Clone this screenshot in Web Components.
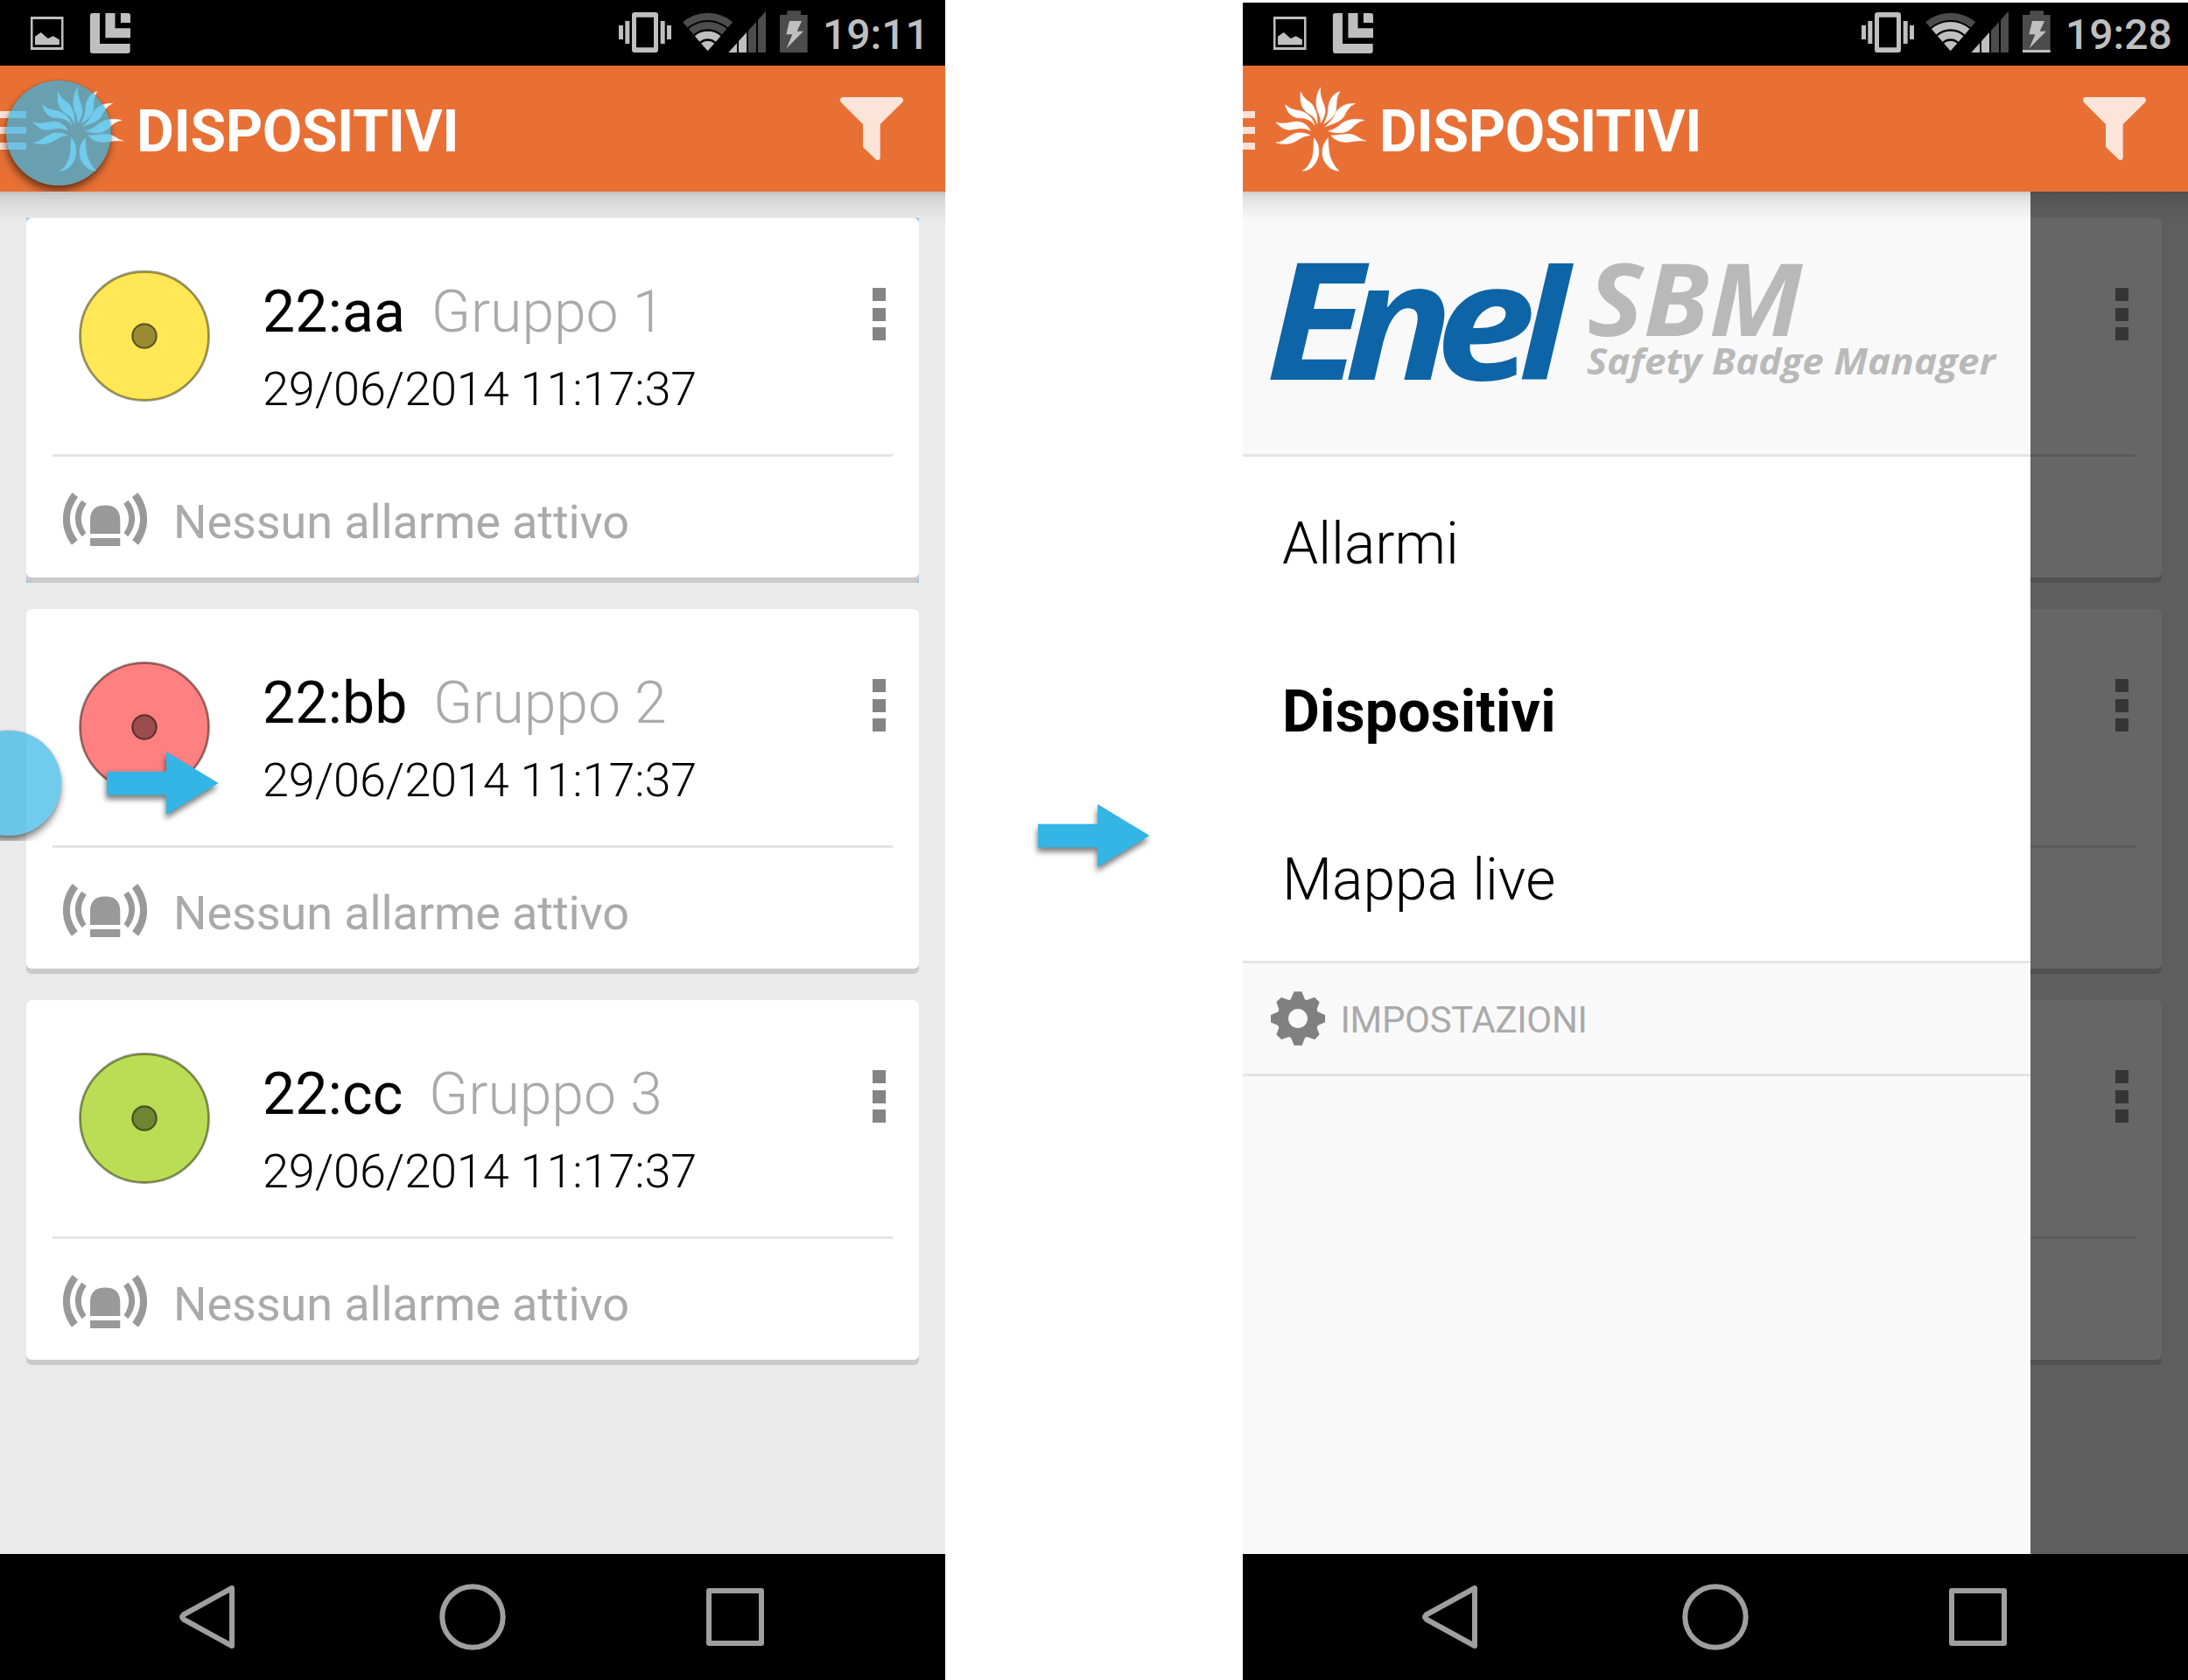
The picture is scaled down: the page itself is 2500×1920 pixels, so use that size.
<!DOCTYPE html>
<html lang="it">
<head>
<meta charset="utf-8">
<title>Dispositivi</title>
<style>
html,body{margin:0;background:#fff}
body{width:2500px;height:1920px;overflow:hidden;display:flex;font-family:Roboto,"Liberation Sans",sans-serif;color:#000}
.between{width:340px;display:flex;flex-direction:column;align-items:center;padding-top:919px;box-sizing:border-box}
</style>
</head>
<body>

<phone-screen>
  <status-bar slot="status" time="19:11" wifi="2"></status-bar>
  <action-bar slot="bar" menu="30">DISPOSITIVI<tap-mark slot="mark" style="left:7px;top:17px"></tap-mark></action-bar>
  <device-card class="focus" color="#ffe755" dot="#998b33" name="22:aa" group="Gruppo 1" time="29/06/2014 11:17:37">Nessun allarme attivo</device-card>
  <device-card color="#ff8080" dot="#994d4d" name="22:bb" group="Gruppo 2" time="29/06/2014 11:17:37">Nessun allarme attivo</device-card>
  <device-card color="#bbdd55" dot="#708533" name="22:cc" group="Gruppo 3" time="29/06/2014 11:17:37">Nessun allarme attivo</device-card>
  <edge-swipe slot="over"></edge-swipe>
  <nav-bar slot="nav"></nav-bar>
</phone-screen>

<div class="between"><flow-arrow></flow-arrow></div>

<phone-screen>
  <status-bar slot="status" class="inset" time="19:28" wifi="3" charge></status-bar>
  <action-bar slot="bar" menu="14">DISPOSITIVI</action-bar>
  <device-card></device-card>
  <device-card></device-card>
  <device-card></device-card>
  <app-drawer slot="over">
    <drawer-item>Allarmi</drawer-item>
    <drawer-item class="current">Dispositivi</drawer-item>
    <drawer-item>Mappa live</drawer-item>
    <span slot="settings">IMPOSTAZIONI</span>
  </app-drawer>
  <nav-bar slot="nav"></nav-bar>
</phone-screen>

<script>
const define = (name, html, setup) => {
  const tpl = document.createElement('template');
  tpl.innerHTML = html;
  customElements.define(name, class extends HTMLElement {
    constructor() {
      super();
      this.attachShadow({mode: 'open'}).appendChild(tpl.content.cloneNode(true));
    }
    connectedCallback() { if (setup) setup(this, this.shadowRoot); }
  });
};

define('phone-screen', `
<style>
:host{position:relative;display:flex;flex-direction:column;width:1080px;height:1920px;flex:none;overflow:hidden}
.body{position:relative;flex:1;background:#eaeaea;overflow:hidden}
.list{display:flex;flex-direction:column;gap:30px;padding:30px}
.shade{position:absolute;left:0;right:0;top:0;height:36px;background:linear-gradient(rgba(0,0,0,.16) 3px,rgba(0,0,0,.12) 3px,rgba(0,0,0,.06) 15px,rgba(0,0,0,.018) 28px,transparent)}
</style>
<slot name="status"></slot>
<slot name="bar"></slot>
<div class="body"><div class="list"><slot></slot></div><slot name="over"></slot><div class="shade"></div></div>
<slot name="nav"></slot>`);

define('status-bar', `
<style>
:host{display:flex;align-items:flex-start;height:75px;box-sizing:border-box;background:#000;padding:0 14px 0 35px;flex:none}
:host(.inset){background:linear-gradient(#fff 3px,#000 3px)}
svg{display:block;flex:none}
.l{margin-top:15px}.r{margin:12px 17px 0 auto}
.t{font-weight:500;font-size:48px;line-height:75px;padding-top:2px;color:#bfbfbf;width:126px;white-space:nowrap}
.d{fill:#4c4c4c}.w{fill:#bfbfbf}
.a{fill:none;stroke:#4c4c4c}.on{stroke:#bfbfbf}
</style>
<svg class="l" width="114" height="46" viewBox="98 45 319 138" preserveAspectRatio="none">
 <g class="w"><path fill-rule="evenodd" d="M98 57H203V171H98ZM105 66V162H196V66Z"/>
 <path d="M112 125L131 111L153 132L170 124L190 136V154H112Z"/>
 <path d="M288 54Q288 45 296 45H319V150H416V175Q416 183 408 183H297Q288 183 288 174Z"/>
 <path d="M337 45H368V97H417V130H337Z"/><path d="M386 45H409Q417 45 417 53V78H386Z"/></g>
</svg>
<svg class="r" width="216" height="48" viewBox="81 36 648 144">
 <g class="w"><path fill-rule="evenodd" d="M136 42H206Q216 42 216 52V170Q216 180 206 180H136Q126 180 126 170V52Q126 42 136 42ZM141 59V163H201V59Z"/>
 <path d="M81 87H96V135H81ZM103 72H118V150H103ZM224 72H239V150H224ZM246 87H261V135H246Z"/></g>
 <path class="a" stroke-width="25" d="M308.6 85.2A118.5 118.5 0 0 1 463.4 85.2"/>
 <path class="a b2" stroke-width="25" d="M328.9 108.7A87.5 87.5 0 0 1 443.1 108.7"/>
 <path class="a on" stroke-width="26" d="M350.1 133.3A55 55 0 0 1 421.9 133.3"/>
 <path class="w" d="M386 175L363 148.5A35 35 0 0 1 409 148.5Z"/>
 <path class="w" d="M457 180L486 148V180ZM492 180V141L519 111V180Z"/>
 <path class="d" d="M525 180V105L552 75V180ZM558 180V68L585 38V180Z"/>
 <path class="d" d="M633 51H658V37H705V51H728V180H633Z"/>
 <path class="w" d="M666 72H708L692 107H714L656 166L676 118H655Z"/>
 <path class="w c" d="M633 171H728V180H633Z"/>
</svg>
<div class="t"></div>`, (el, r) => {
  r.querySelector('.t').textContent = el.getAttribute('time');
  if (el.getAttribute('wifi') === '3') r.querySelector('.b2').classList.add('on');
  if (!el.hasAttribute('charge')) r.querySelector('.c').remove();
});

define('action-bar', `
<style>
:host{position:relative;display:flex;align-items:flex-start;height:144px;flex:none;background:#e87035;overflow:hidden;color:#fff;font-weight:700;font-size:66px}
.m{display:flex;flex-direction:column;gap:10px;padding-top:52px}
.m i{height:8px;background:#fce2d6}
svg{display:block;flex:none}
.left{width:38px;flex:none}
.tree{margin-top:24.5px;overflow:visible}
.title{line-height:144px;padding-top:4px;margin-left:15px;white-space:nowrap;letter-spacing:-.4px}
.f{margin:36px 48px 0 auto}
</style>
<div class="left"><div class="m"><i></i><i></i><i></i></div></div>
<svg class="tree" width="103" height="95.5" viewBox="135 299 288 286" preserveAspectRatio="none" fill="#fff" stroke="#fff" stroke-width="1.500">
<path d="M277 299C262 325 260 350 268 380C274 395 278 405 278 420C286 405 293 390 292 375C289 350 273 335 277 299Z"/>
<path d="M214 314C211 345 215 370 235 385C250 395 262 403 266 423C268 400 265 385 255 365C247 345 225 345 214 314Z"/>
<path d="M165 358C170 385 185 402 210 403C232 404 247 410 258 428C255 410 243 393 225 384C210 375 185 380 165 358Z"/>
<path d="M135 418C150 438 170 448 190 442C215 437 230 437 245 447C238 430 222 416 200 416C180 417 160 427 135 418Z"/>
<path d="M135 488C155 494 180 495 200 482C215 470 228 464 244 463C230 454 205 450 188 460C170 468 160 485 135 488Z"/>
<path d="M339 313C315 320 303 345 302 370C302 390 296 405 288 423C303 412 320 400 326 380C330 355 325 335 339 313Z"/>
<path d="M388 354C360 352 335 365 325 388C318 408 305 418 292 433C310 425 340 418 352 398C360 380 370 362 388 354Z"/>
<path d="M417 411C390 404 362 408 345 422C330 438 315 445 302 448C325 456 350 458 370 444C385 430 395 415 417 411Z"/>
<path d="M423 482C405 478 395 463 375 459C350 456 330 465 311 463C320 478 340 487 360 486C385 484 400 478 423 482Z"/>
<path d="M257 472C253 500 258 530 245 553C238 570 228 580 219 584C245 585 265 560 271 530C272 505 272 495 257 472Z"/>
<path d="M301 472C303 500 302 530 315 553C322 570 330 577 336 584C310 585 290 560 284 535C281 505 287 490 301 472Z"/>
</svg>
<div class="title"><slot></slot></div>
<svg class="f" width="72" height="72" viewBox="0 0 72 72" fill="#fce4d8"><path d="M3.5 0H68.5C72 0 73 4 71 6L45.7 31V69C45.7 72 42.5 73 40.5 71L27 58Q26 57 26 55.500V31L1 6C-1 4 0 0 3.500 0Z"/></svg>
<slot name="mark"></slot>`, (el, r) => { r.querySelector('.m').style.width = el.getAttribute('menu') + 'px'; });

define('tap-mark', `
<style>:host{position:absolute;width:120px;height:120px;border-radius:50%;background:rgba(51,181,229,.7);box-shadow:-1px 6px 9px rgba(0,0,0,.5),0 0 2px rgba(0,0,0,.3)}</style>`);

define('flow-arrow', `
<style>:host{display:block;width:128px;height:72px}svg{display:block;overflow:visible;filter:drop-shadow(-1px 5px 3px rgba(0,0,0,.5))}</style>
<svg width="128" height="72" viewBox="0 0 128 72"><path fill="#33b5e5" d="M0 22.700H68V0L127.500 36L68 72V49.500H0Z"/></svg>`);

define('edge-swipe', `
<style>
:host{display:block}
.clip{position:absolute;left:0;top:600px;width:90px;height:142px;overflow:hidden}
tap-mark{left:-50px;top:16px}
flow-arrow{position:absolute;left:122px;top:640px}
</style>
<div class="clip"><tap-mark></tap-mark></div><flow-arrow></flow-arrow>`);

define('device-card', `
<style>
:host{display:block;height:417px}
:host(.focus){background:#80cbe6}
.sh{height:417px;background:#cacaca;border-radius:6px}
.c{height:411px;background:#fff;border-radius:6px;display:flex;flex-direction:column}
.top{display:flex;flex:none;align-items:flex-start;height:270px;margin:0 30px;border-bottom:3px solid #e4e4e4;padding-left:30px}
.o{flex:none;margin-top:60px}
.info{margin:63px 0 0 60px;display:flex;flex-direction:column;gap:4px;white-space:nowrap}
.n{font-size:66px;line-height:90px;display:flex;gap:29.5px}
.id{letter-spacing:.25px}
.g{font-weight:300;color:#aaa}
.d{font-weight:300;font-size:54px;line-height:78px;letter-spacing:-.1px}
.dots{display:flex;flex-direction:column;gap:7.5px;margin:80px 8.5px 0 auto}
.dots i{width:15px;height:15px;background:#848484}
.al{height:138px;flex:none;display:flex;align-items:flex-start;padding-left:42px;color:#aaa;font-size:54px;gap:30px}
.al svg{margin-top:41px;flex:none}
.al div{line-height:138px;margin-top:5.5px;height:132px;white-space:nowrap;letter-spacing:-.1px}
</style>
<div class="sh"><div class="c"><div class="top">
<svg class="o" width="150" height="150" viewBox="0 0 150 150"><circle class="big" cx="75" cy="75" r="74"/><circle cx="75" cy="75" r="73.500" fill="none" stroke="#000" stroke-opacity=".4" stroke-width="2.800"/><circle class="dot" cx="75" cy="75" r="14.500"/><circle cx="75" cy="75" r="13.700" fill="none" stroke="#000" stroke-opacity=".4" stroke-width="2.200"/></svg>
<div class="info"><div class="n"><span class="id"></span><span class="g"></span></div><div class="d"></div></div>
<div class="dots"><i></i><i></i><i></i></div>
</div>
<div class="al"><svg width="96" height="61" viewBox="202 1030 269 182" preserveAspectRatio="none" fill="#999"><path d="M289 1170V1122C289 1090 305 1073 337 1073S385 1090 385 1122V1170ZM289 1185H385V1212H289Z"/><path id="w" d="M232 1030L250 1046C216 1095 216 1145 249 1192L230 1208C192 1155 192 1083 232 1030ZM262 1056L277 1068C255 1102 255 1134 276 1167L263 1180C234 1143 234 1093 262 1056Z"/><use href="#w" transform="translate(673,0) scale(-1,1)"/></svg><div><slot></slot></div></div>
</div></div>`, (el, r) => {
  const a = n => el.getAttribute(n) || '';
  r.querySelector('.big').setAttribute('fill', a('color') || '#ccc');
  r.querySelector('.dot').setAttribute('fill', a('dot') || '#888');
  r.querySelector('.id').textContent = a('name');
  r.querySelector('.g').textContent = a('group');
  r.querySelector('.d').textContent = a('time');
});

define('app-drawer', `
<style>
:host{position:absolute;left:0;right:0;top:0;bottom:0;background:rgba(0,0,0,.6);display:flex}
.p{width:900px;background:#f9f9f9;display:flex;flex-direction:column}
.head{height:300px;border-bottom:3px solid #e4e4e4}
.head svg{display:block;font-family:"Open Sans","Noto Sans",sans-serif;font-style:italic;font-weight:700}
.items{background:#fff}
.set{height:126px;border-top:3px solid #e4e4e4;border-bottom:3px solid #e4e4e4;display:flex;align-items:flex-start;padding-left:32px;color:#aaa;font-size:42px;gap:17.5px}
.set svg{margin-top:32px;flex:none}
.set div{line-height:126px;margin-top:2px;height:124px;letter-spacing:-.33px}
</style>
<div class="p">
<div class="head"><svg width="900" height="300" viewBox="0 0 900 300">
<text transform="translate(26 0) scale(1.1 1)" x="0" y="215.500" font-size="187" letter-spacing="-19" fill="#0d64a6">Ene<tspan x="263" font-size="175" letter-spacing="0">l</tspan></text>
<text x="393.500" y="164.500" font-size="114" textLength="246" lengthAdjust="spacingAndGlyphs" fill="#b9b9b9">SBM</text>
<text x="393" y="209" font-size="41.500" textLength="467" lengthAdjust="spacingAndGlyphs" fill="#b9b9b9">Safety Badge Manager</text>
</svg></div>
<div class="items"><slot></slot></div>
<div class="set"><svg width="62" height="62" viewBox="126 159 186 186"><path fill="#808080" fill-rule="evenodd" d="M206 160H232L243 187L249 189L276 179L293 196L284 220L286 228L312 240V265L287 276L284 284L293 307L277 324L250 315L243 318L233 344H206L195 318L188 315L162 324L145 307L154 284L151 276L126 265V240L152 229L154 220L145 196L162 179L188 189L194 187ZM219 219A33 33 0 1 0 219.100 219Z"/></svg><div><slot name="settings"></slot></div></div>
</div>`);

define('drawer-item', `
<style>
:host{display:block;height:192px;box-sizing:border-box;padding:4px 0 0 45px;line-height:192px;font-size:66px;font-weight:300;white-space:nowrap}
:host(.current){font-weight:700;letter-spacing:.2px}
</style><slot></slot>`);

define('nav-bar', `
<style>:host{display:flex;height:144px;background:#000;flex:none;align-items:center;justify-content:space-between;padding:0 207px 0 205px}svg{display:block}.c{margin-left:4.500px}</style>
<svg width="63" height="76" viewBox="0 0 63 76" fill="none" stroke="#9f9f9f" stroke-width="6" stroke-linejoin="round"><path d="M60 5V71L4.500 40.500Q2 38 4.500 35.500Z"/></svg>
<svg class="c" width="76" height="76" viewBox="0 0 76 76" fill="none" stroke="#9f9f9f" stroke-width="6"><circle cx="38" cy="38" r="34.700"/></svg>
<svg width="66" height="66" viewBox="0 0 66 66" fill="none" stroke="#9f9f9f" stroke-width="6" stroke-linejoin="round"><path d="M3 3H63V63H3Z"/></svg>`);
</script>
</body>
</html>
